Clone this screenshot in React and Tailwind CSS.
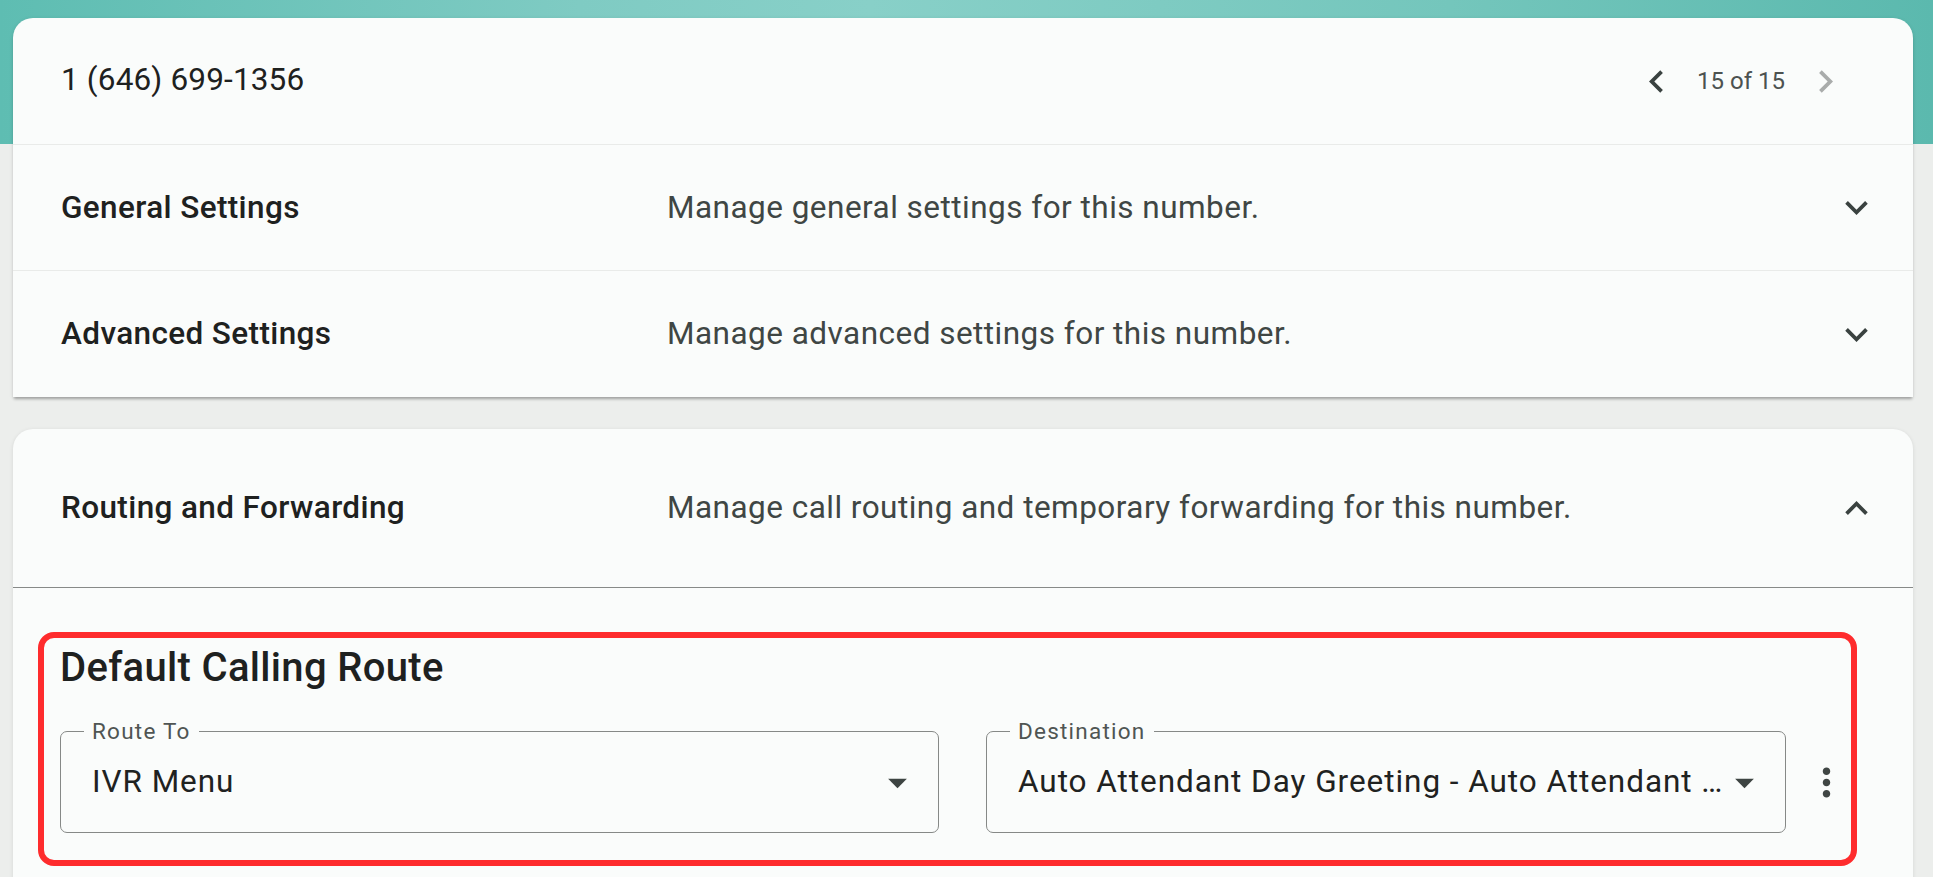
import React from "react";

// MUI-style icon paths, drawn in a 24 unit box
const ICONS = {
  chevronLeft: "M15.41 7.41 14 6l-6 6 6 6 1.41-1.41L10.83 12z",
  chevronRight: "M10 6 8.59 7.41 13.17 12l-4.58 4.59L10 18l6-6z",
  expandMore: "M16.59 8.59 12 13.17 7.41 8.59 6 10l6 6 6-6z",
  expandLess: "m12 8-6 6 1.41 1.41L12 10.83l4.59 4.58L18 14z",
  arrowDropDown: "M7 10l5 5 5-5z",
  moreVert:
    "M12 8c1.1 0 2-.9 2-2s-.9-2-2-2-2 .9-2 2 .9 2 2 2m0 2c-1.1 0-2 .9-2 2s.9 2 2 2 2-.9 2-2-.9-2-2-2m0 6c-1.1 0-2 .9-2 2s.9 2 2 2 2-.9 2-2-.9-2-2-2",
};

const Icon = ({ name, className = "" }) => (
  <svg
    viewBox="0 0 24 24"
    className={`h-[45px] w-[45px] shrink-0 fill-current ${className}`}
  >
    <path d={ICONS[name]} />
  </svg>
);

const SettingsRow = ({ title, description, expanded, className = "" }) => (
  <div className={`flex items-center pl-[48px] pr-[34px] ${className}`}>
    <div className="w-[606px] shrink-0 text-[31.5px] font-medium tracking-[0.012em] text-[#1e2120]">
      {title}
    </div>
    <div className="flex-1 text-[31.5px] tracking-[0.015em] text-[#3f4644]">
      {description}
    </div>
    <Icon
      name={expanded ? "expandLess" : "expandMore"}
      className="text-[#3a4240]"
    />
  </div>
);

const OutlinedSelect = ({ label, value, className = "" }) => (
  <div
    className={`relative flex h-[102px] items-center rounded-[7px] border border-[#868987] pl-[31px] pr-[18px] ${className}`}
  >
    <span className="absolute left-[23px] top-[-12px] bg-[#fafcfb] px-[8px] text-[22.5px] leading-none tracking-[0.055em] text-[#4f5553]">
      {label}
    </span>
    <span className="min-w-0 flex-1 truncate text-[31.5px] tracking-[0.03em] text-[#1f2221]">
      {value}
    </span>
    <Icon name="arrowDropDown" className="-ml-[3px] text-[#3d4442]" />
  </div>
);

export default function App() {
  return (
    <div className="h-[877px] overflow-hidden bg-[#eceeec] bg-[linear-gradient(90deg,#5ebdb2_0%,#7fcbc3_30%,#88d0c8_45%,#74c6bc_75%,#5bb9ae_100%)] bg-[length:100%_144px] bg-no-repeat pl-[13px] pr-[20px] pt-[18px] font-[Roboto,sans-serif]">
      {/* number header + collapsed sections */}
      <div className="rounded-t-[20px] bg-[#fafcfb] shadow-[0_3px_3px_-1px_rgba(0,0,0,0.28),0_1px_4px_0_rgba(0,0,0,0.1)]">
        <div className="flex h-[126px] items-center pl-[48px] pr-[65px]">
          <div className="-mt-[3px] flex-1 text-[31.5px] tracking-[0.005em] text-[#1e2120]">
            1 (646) 699-1356
          </div>
          <Icon name="chevronLeft" className="text-[#3a4240]" />
          <span className="mx-[18px] text-[24px] text-[#4c5250]">15 of 15</span>
          <Icon name="chevronRight" className="text-[#a9acab]" />
        </div>
        <SettingsRow
          title="General Settings"
          description="Manage general settings for this number."
          className="h-[126px] border-t border-[#e9ebe9]"
        />
        <SettingsRow
          title="Advanced Settings"
          description="Manage advanced settings for this number."
          className="h-[127px] border-t border-[#e9ebe9]"
        />
      </div>

      {/* expanded routing section */}
      <div className="mt-[32px] rounded-t-[20px] bg-[#fafcfb] pb-[40px] shadow-[0_1px_4px_0_rgba(0,0,0,0.1)]">
        <SettingsRow
          title="Routing and Forwarding"
          description="Manage call routing and temporary forwarding for this number."
          expanded
          className="h-[159px] border-b border-[#878a88]"
        />
        <div className="pl-[25px] pt-[44px]">
          <div className="w-[1819px] rounded-[16px] border-[6px] border-[#fe2c2d] pb-[27px] pl-[16px] pt-[7px]">
            <h2 className="text-[40px] font-medium leading-[45px] tracking-[0.008em] text-[#1e2120]">
              Default Calling Route
            </h2>
            <div className="mt-[41px] flex items-center">
              <OutlinedSelect label="Route To" value="IVR Menu" className="w-[879px]" />
              <OutlinedSelect
                label="Destination"
                value="Auto Attendant Day Greeting - Auto Attendant Day Greeting"
                className="ml-[47px] w-[800px]"
              />
              <Icon name="moreVert" className="ml-[18px] text-[#404644]" />
            </div>
          </div>
        </div>
      </div>
    </div>
  );
}
